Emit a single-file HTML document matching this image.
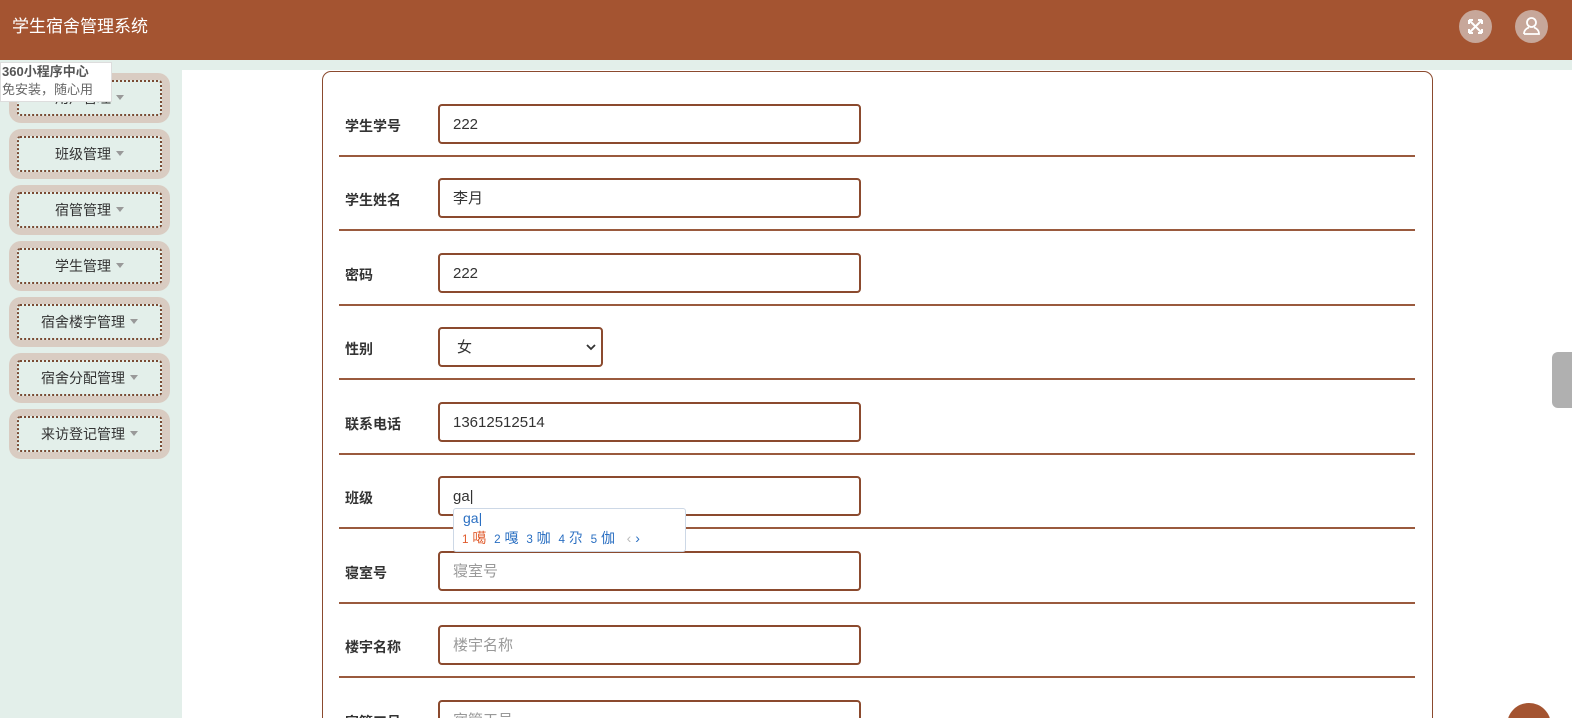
<!DOCTYPE html>
<html><head><meta charset="utf-8"><style>
*{box-sizing:border-box;margin:0;padding:0}
html,body{width:1572px;height:718px;overflow:hidden}
body{background:#fff;font-family:"Liberation Sans","Noto Sans CJK SC",sans-serif;position:relative}
.hd{position:absolute;left:0;top:0;width:1572px;height:60px;background:#a45431;color:#fff;font-size:17px;line-height:54px;padding-left:12px}
.strip{position:absolute;left:0;top:60px;width:1572px;height:10px;background:#e3efea}
.side{position:absolute;left:0;top:60px;width:182px;height:658px;background:#e3efea}
.it{position:absolute;left:9px;width:161px;height:50px;background:#d9ccc2;border-radius:12px}
.it div{position:absolute;left:8px;top:7px;width:145px;height:36px;border:2px dotted #7a4a33;border-radius:3px;background:#e3efea;text-align:center;line-height:32px;font-size:14px;color:#333}
.it div:after{content:"";display:inline-block;border:4px solid transparent;border-top:5px solid #999;margin-left:5px;vertical-align:-1px}
.card{position:absolute;left:322px;top:71px;width:1111px;height:700px;border:1.5px solid #8b4a2e;border-radius:9px}
.lab{position:absolute;left:345px;font-size:14px;font-weight:bold;color:#333}
.inp{position:absolute;left:438px;width:423px;height:40px;border:2px solid #8b4a2e;border-radius:4px;font-size:15px;color:#333;line-height:38px;padding-left:13px}
.ph{color:#999}
.ln{position:absolute;left:339px;width:1076px;height:2px;background:#9a5a3e}
.ic{position:absolute;top:10px;width:33px;height:33px;border-radius:50%;background:#c7a79a}
.tip{position:absolute;left:0;top:62px;width:112px;height:40px;background:#fff;border:1px solid #ddd;font-size:13px;color:#666;line-height:18px;padding-left:1px}
.ime{position:absolute;left:453px;top:508px;width:233px;height:44px;background:#fff;border:1px solid #cdd8e6;border-radius:3px;font-size:14px}
</style></head><body>
<div class="hd">学生宿舍管理系统</div>
<div class="ic" style="left:1459px"><svg width="33" height="33" viewBox="0 0 33 33" fill="none" stroke="#fff" stroke-width="2"><path d="M10 10l13 13M23 10L10 23M10 10h4M10 10v4M23 10h-4M23 10v4M10 23h4M10 23v-4M23 23h-4M23 23v-4"/></svg></div>
<div class="ic" style="left:1515px"><svg width="33" height="33" viewBox="0 0 33 33" fill="none" stroke="#fff" stroke-width="1.8"><circle cx="16.5" cy="12.5" r="4.5"/><path d="M9 24h15c0-4-3-6-5-6.5M9 24c0-4 3-6 5-6.5"/></svg></div>
<div class="strip"></div>
<div class="side"></div>
<div class="it" style="top:73px"><div>用户管理</div></div>
<div class="it" style="top:129px"><div>班级管理</div></div>
<div class="it" style="top:185px"><div>宿管管理</div></div>
<div class="it" style="top:241px"><div>学生管理</div></div>
<div class="it" style="top:297px"><div>宿舍楼宇管理</div></div>
<div class="it" style="top:353px"><div>宿舍分配管理</div></div>
<div class="it" style="top:409px"><div>来访登记管理</div></div>
<div class="tip"><b style="color:#555">360小程序中心</b><br>免安装，随心用</div>
<div class="card"></div>
<div class="lab" style="top:116px">学生学号</div><div class="inp" style="top:104px">222</div><div class="ln" style="top:155px"></div>
<div class="lab" style="top:190px">学生姓名</div><div class="inp" style="top:178px">李月</div><div class="ln" style="top:229px"></div>
<div class="lab" style="top:265px">密码</div><div class="inp" style="top:253px">222</div><div class="ln" style="top:304px"></div>
<div class="lab" style="top:339px">性别</div><div class="inp" style="top:327px;width:165px;padding-left:17px">女<svg style="position:absolute;right:5px;top:15px" width="10" height="7" viewBox="0 0 10 7" fill="none" stroke="#333" stroke-width="1.8"><path d="M1 1l4 4 4-4"/></svg></div><div class="ln" style="top:378px"></div>
<div class="lab" style="top:414px">联系电话</div><div class="inp" style="top:402px">13612512514</div><div class="ln" style="top:453px"></div>
<div class="lab" style="top:488px">班级</div><div class="inp" style="top:476px">ga|</div><div class="ln" style="top:527px"></div>
<div class="lab" style="top:563px">寝室号</div><div class="inp ph" style="top:551px">寝室号</div><div class="ln" style="top:602px"></div>
<div class="lab" style="top:637px">楼宇名称</div><div class="inp ph" style="top:625px">楼宇名称</div><div class="ln" style="top:676px"></div>
<div class="lab" style="top:712px">宿管工号</div><div class="inp ph" style="top:700px">宿管工号</div>
<div class="ime"><div style="color:#2a6fc2;padding:0 0 0 9px;line-height:18px">ga|</div><div style="padding-left:8px;color:#2a6fc2;line-height:22px"><span style="color:#e05a2b"><small>1</small> 噶</span>&nbsp; <small>2</small> 嘎&nbsp; <small>3</small> 咖&nbsp; <small>4</small> 尕&nbsp; <small>5</small> 伽&nbsp;&nbsp; <span style="color:#bbb">‹</span> ›</div></div>
<div style="position:absolute;left:1552px;top:352px;width:30px;height:56px;background:#b0b0b0;border-radius:6px"></div>
<div style="position:absolute;left:1507px;top:703px;width:44px;height:44px;background:#a45431;border-radius:50%"></div>
</body></html>
